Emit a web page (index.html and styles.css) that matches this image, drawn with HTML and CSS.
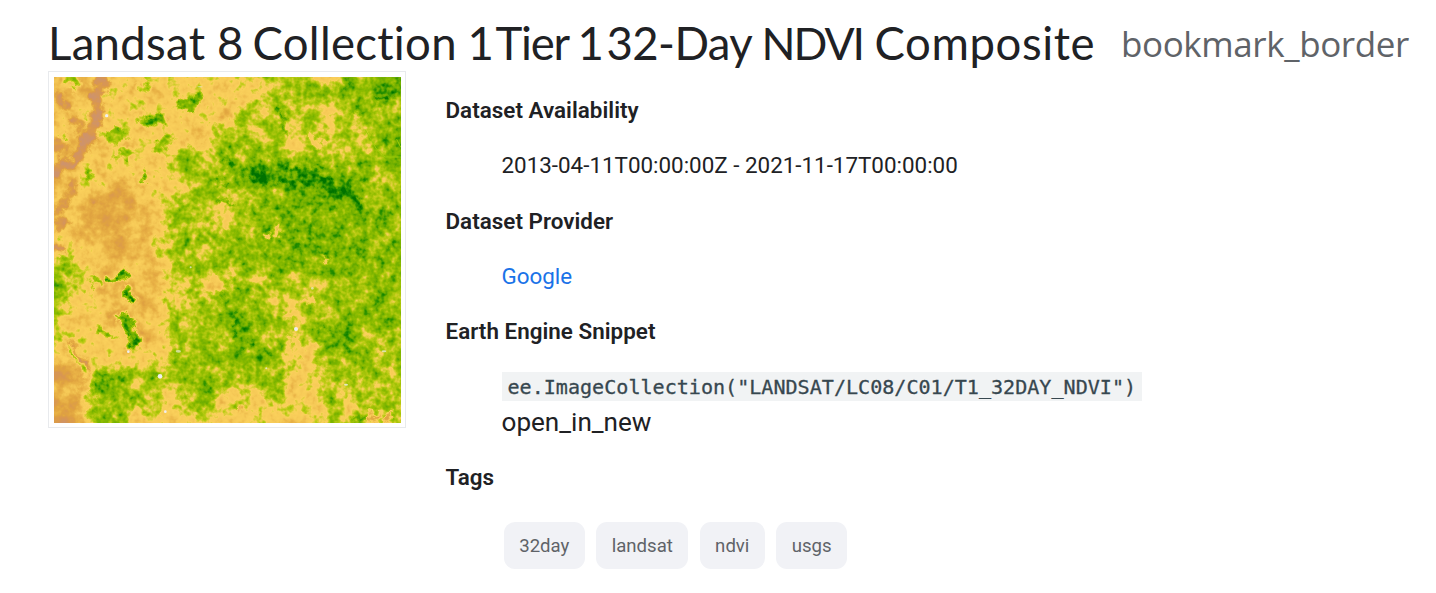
FILE: index.html
```
<!DOCTYPE html>
<html lang="en">
<head>
<meta charset="utf-8">
<title>Landsat 8 Collection 1 Tier 1 32-Day NDVI Composite</title>
<link rel="stylesheet" href="styles.css">
</head>
<body>
<header class="header">
  <h1 class="title"><span class="w1">Landsat</span> <span class="w2">8</span> <span class="w3">Collection</span> <span class="w4">1</span> <span class="w5">Tier</span> <span class="w6">1</span> <span class="w7">32-Day</span> <span class="w8">NDVI</span> <span class="w9">Composite</span></h1>
  <span class="bookmark">bookmark_border</span>
</header>
<main class="main">
  <figure class="thumb">
    <svg class="map" viewBox="42 33 1041 1038" preserveAspectRatio="none" role="img" aria-label="NDVI map">
      <defs>
        <filter id="soft" x="-20%" y="-20%" width="140%" height="140%"><feGaussianBlur stdDeviation="17"/></filter>
        <filter id="fine" x="-20%" y="-20%" width="140%" height="140%"><feGaussianBlur stdDeviation="4"/></filter>
        <!-- Adds terrain noise to the grey field, then maps grey to the vegetation palette -->
        <filter id="ndvi" filterUnits="userSpaceOnUse" x="42" y="33" width="1041" height="1038" color-interpolation-filters="sRGB">
          <feTurbulence type="fractalNoise" baseFrequency="0.026" numOctaves="4" seed="8" result="t1"/>
          <feDisplacementMap in="SourceGraphic" in2="t1" scale="52" xChannelSelector="R" yChannelSelector="G" result="field"/>
          <feTurbulence type="fractalNoise" baseFrequency="0.019" numOctaves="5" seed="21"/>
          <feColorMatrix values="1 0 0 0 0  1 0 0 0 0  1 0 0 0 0  0 0 0 0 1" result="patches"/>
          <feTurbulence type="fractalNoise" baseFrequency="0.06" numOctaves="2" seed="3"/>
          <feColorMatrix values="1 0 0 0 0  1 0 0 0 0  1 0 0 0 0  0 0 0 0 1" result="grain"/>
          <feComposite in="field" in2="patches" operator="arithmetic" k1="0" k2="1" k3="0.48" k4="-0.24" result="f1"/>
          <feComposite in="f1" in2="grain" operator="arithmetic" k1="0.45" k2="0.775" k3="0.1" k4="-0.05"/>
          <feComponentTransfer>
            <feFuncR type="table" tableValues=".81 .85 .88 .92 .965 .985 .74 .56 .43 .16 0"/>
            <feFuncG type="table" tableValues=".58 .59 .64 .71 .79 .82 .80 .74 .68 .57 .45"/>
            <feFuncB type="table" tableValues=".42 .32 .25 .28 .34 .36 .08 0 0 0 0"/>
            <feFuncA type="linear" slope="0" intercept="1"/>
          </feComponentTransfer>
        </filter>
      </defs>
      <g filter="url(#ndvi)">
        <rect x="-60" y="-60" width="1240" height="1240" fill="#737373"/>
        <g filter="url(#soft)">
          <path fill="#a4a4a4" d="M680-60L675 80 600 130 510 195 390 250 375 320 440 350 375 430 355 530 400 600 370 660 400 730 375 790 400 860 370 960 400 1010 500 990 600 965 690 990 730 900 760 810 830 840 850 950 960 960 1180 970V-60z"/>
          <path fill="#707070" d="M840 0H930L890 65 850 70z"/>
          <path fill="#989898" d="M690 90L900 120 990 240 880 290 720 290 600 210z"/>
          <path fill="#909090" d="M430 410L600 390 690 480 600 520 470 480z"/>
          <path fill="#b2b2b2" d="M940 440H1180V850L900 800 820 700 700 640 600 630 560 560 400 560 390 480 460 510 640 530z"/>
          <path fill="#b4b4b4" d="M990 110H1180V420H1000L1030 290z"/>
          <path fill="#9a9a9a" d="M600 620L850 620 870 740 740 830 680 700z"/>
          <path fill="#c0c0c0" d="M900 25H1180V100H920z"/>
          <path fill="#d0d0d0" d="M560 285L700 280 850 310 960 340 980 450 900 460 800 420 700 370 580 340z"/>
          <path fill="#bfbfbf" d="M650 400L820 400 960 470 960 620 700 620 640 510z"/>
          <path fill="#c2c2c2" d="M520 670L600 670 660 820 680 870 620 850 560 800z"/>
          <path fill="#b2b2b2" d="M380 880L560 830 720 860 700 960 640 990 580 930 460 1000 380 980z"/>
          <path fill="#c0c0c0" d="M820 760L930 780 960 900 860 860z"/>
          <path fill="#747474" d="M770 850L820 850 840 1000 1000 1030V1180H500L520 1010 700 1010z"/>
          <path fill="#9c9c9c" d="M840 940H1180V1180H900L840 1010z"/>
          <path fill="#b8b8b8" d="M160 915L240 910 300 900 360 960 260 1000 250 1110H170L150 1010z"/>
          <path fill="#9c9c9c" d="M270 910L400 920 380 1000 260 1060z"/>
          <path fill="#b0b0b0" d="M-40 590L100 580 110 640 75 720 60 810-40 820z"/>
          <path fill="#525252" d="M130 380L310 340 350 470 360 720 330 830 270 850 230 800 180 740 190 640 150 560 100 500z"/>
          <path fill="#383838" d="M130 420L300 350 290 440 220 530 130 490z"/>
          <path fill="#363636" d="M-40 900L80 880 130 940 140 1180H-40z"/>
          <path fill="#5c5c5c" d="M-60-60H190L160 200 130 290 130 360 60 470-60 560z"/>
          <ellipse cx="560" cy="150" rx="34" ry="18" fill="#333"/>
          <ellipse cx="360" cy="710" rx="28" ry="20" fill="#383838"/>
          <ellipse cx="470" cy="220" rx="45" ry="25" fill="#505050"/>
          <ellipse cx="530" cy="650" rx="42" ry="34" fill="#606060"/>
          <ellipse cx="430" cy="670" rx="14" ry="60" fill="#666"/>
          <path stroke="#b5b5b5" stroke-width="36" fill="none" d="M495 900V1110M715 880V1010"/>
        </g>
        <g filter="url(#fine)">
          <path fill="none" stroke="#101010" stroke-width="30" d="M185 10L165 170 130 250 40 320"/>
          <path fill="none" stroke="#202020" stroke-width="26" d="M110 350L50 450M55 80L70 130M100 160L130 190M45 220L70 260M40 480L90 460M40 560L70 550"/>
          <path fill="none" stroke="#aaa" stroke-width="24" d="M70 40L120 60M200 210H265M230 175V240M235 265H270M290 160L370 165M350 240L395 220M150 325L165 330M320 75L300 45M60 200L80 215"/>
          <path fill="none" stroke="#c8c8c8" stroke-width="24" d="M410 105L455 125 480 90M315 165H370"/>
          <path fill="none" stroke="#dedede" stroke-width="13" d="M304 320L313 345M200 640L225 625"/>
          <path fill="none" stroke="#dcdcdc" stroke-width="25" d="M235 625L262 640M266 660L272 700M225 750H255L274 790 280 825 268 850"/>
          <path fill="none" stroke="#b8b8b8" stroke-width="18" d="M170 785L195 802 225 808M150 640L185 655M90 840L108 890 140 920"/>
          <path fill="none" stroke="#151515" stroke-width="10" d="M95 820L110 860 155 915M985 1065L1010 1035M1035 1065L1060 1030"/>
          <path fill="none" stroke="#e8e8e8" stroke-width="22" d="M600 315L680 335 760 350M740 310L850 330 870 350M780 340L880 365 940 395 960 435"/>
          <path fill="none" stroke="#e2e2e2" stroke-width="10" d="M520 345L560 355M540 400L580 415M550 285L580 298M585 740L590 820M625 810V850M1000 100H1050"/>
          <path fill="none" stroke="#d4d4d4" stroke-width="14" d="M720 120L735 210M550 680L570 750M840 790L890 800M930 1060H980"/>
          <ellipse cx="190" cy="975" rx="22" ry="38" fill="#c8c8c8"/>
          <circle cx="690" cy="508" r="11" fill="#606060"/>
          <circle cx="596" cy="1028" r="10" fill="#202020"/>
          <path fill="none" stroke="#707070" stroke-width="16" d="M525 640L545 660M730 750L760 745M770 840L750 800M810 700L830 715M860 570V590M800 200L850 240M930 140L960 155M715 480L720 500"/>
        </g>
      </g>
      <path fill="none" stroke="#9dcc08" stroke-width="3" d="M975 190L1010 250 1035 273H1083M1070 220L1083 245"/>
      <g fill="#f0eff0">
        <circle cx="200" cy="149" r="5"/><circle cx="768" cy="789" r="6"/><circle cx="360" cy="931" r="7"/>
        <circle cx="376" cy="1037" r="4"/><circle cx="265" cy="857" r="4"/><circle cx="817" cy="667" r="4" opacity=".6"/>
        <ellipse cx="918" cy="956" rx="6" ry="3" opacity=".8"/><ellipse cx="1032" cy="856" rx="7" ry="3" opacity=".7"/><ellipse cx="415" cy="856" rx="8" ry="4" opacity=".6"/>
        <ellipse cx="480" cy="62" rx="8" ry="2" opacity=".5"/><circle cx="452" cy="604" r="3" opacity=".7"/><circle cx="679" cy="907" r="3" opacity=".7"/>
      </g>
    </svg>
  </figure>
  <dl class="details">
    <dt>Dataset Availability</dt>
    <dd>2013-04-11T00:00:00Z - 2021-11-17T00:00:00</dd>
    <dt>Dataset Provider</dt>
    <dd class="provider"><a class="link" href="#">Google</a></dd>
    <dt>Earth Engine Snippet</dt>
    <dd class="snippet"><code class="code">ee.ImageCollection("LANDSAT/LC08/C01/T1_32DAY_NDVI")</code><span class="open">open_in_new</span></dd>
    <dt>Tags</dt>
    <dd class="tags"><a class="chip">32day</a><a class="chip">landsat</a><a class="chip">ndvi</a><a class="chip">usgs</a></dd>
  </dl>
</main>
</body>
</html>
```
FILE: styles.css
```
* { box-sizing: border-box; }
body {
  margin: 0;
  height: 593px;
  overflow: hidden;
  background: #fff;
  color: #202124;
  font: 22.4px/33px Roboto, sans-serif;
}
.header {
  display: flex;
  height: 71px;
  padding: 15px 0 0 48px;
  white-space: nowrap;
}
.title {
  display: flex;
  flex: none;
  margin: 0;
  width: 1073px;
  font: 400 45.5px/55px Lato, sans-serif;
  font-variant-ligatures: none;
}
.title span { flex: none; }
.w1 { width: 169px; letter-spacing: .3px; }
.w2 { width: 35.5px; }
.w3 { width: 215px; letter-spacing: .3px; }
.w4 { width: 28px; }
.w5 { width: 82px; letter-spacing: -1.2px; }
.w6 { width: 29px; }
.w7 { width: 155px; letter-spacing: -.6px; }
.w8 { width: 113px; font-size: 44.5px; letter-spacing: -2px; }
.w9 { letter-spacing: .6px; }
.bookmark {
  color: #5f6368;
  font: 35px/58px "Open Sans", sans-serif;
  letter-spacing: -.4px;
}
.main {
  display: flex;
  padding-left: 48px;
}
.thumb {
  flex: none;
  width: 358px;
  height: 357px;
  margin: 0;
  padding: 5px 4px 5px 5px;
  border: 1px solid #e8eaed;
}
.map {
  display: block;
  width: 347px;
  height: 346px;
}
.details {
  margin: 23px 0 0 39.5px;
}
.details dt { font-weight: 600; letter-spacing: .03px; }
.details dd { margin: 22px 0 23px 56px; }
.details .provider { margin-bottom: 22px; }
.link { color: #1a73e8; text-decoration: none; }
.snippet {
  display: flex;
  flex-direction: column;
  align-items: flex-start;
}
.code {
  height: 29px;
  margin-top: 2px;
  padding: 0 6px;
  background: #f1f3f4;
  color: #37474f;
  font: 20.08px/30px "DejaVu Sans Mono", monospace;
  -webkit-text-stroke: .3px #37474f;
}
.open {
  height: 32px;
  margin-top: 5px;
  font-size: 26.1px;
}
.details .tags {
  display: flex;
  gap: 11.5px;
  margin: 28px 0 0 58.3px;
}
.chip {
  height: 47px;
  padding: 0 15.4px;
  border-radius: 11px;
  background: #f1f2f6;
  color: #5f6368;
  font-size: 18.6px;
  line-height: 48px;
}
```
